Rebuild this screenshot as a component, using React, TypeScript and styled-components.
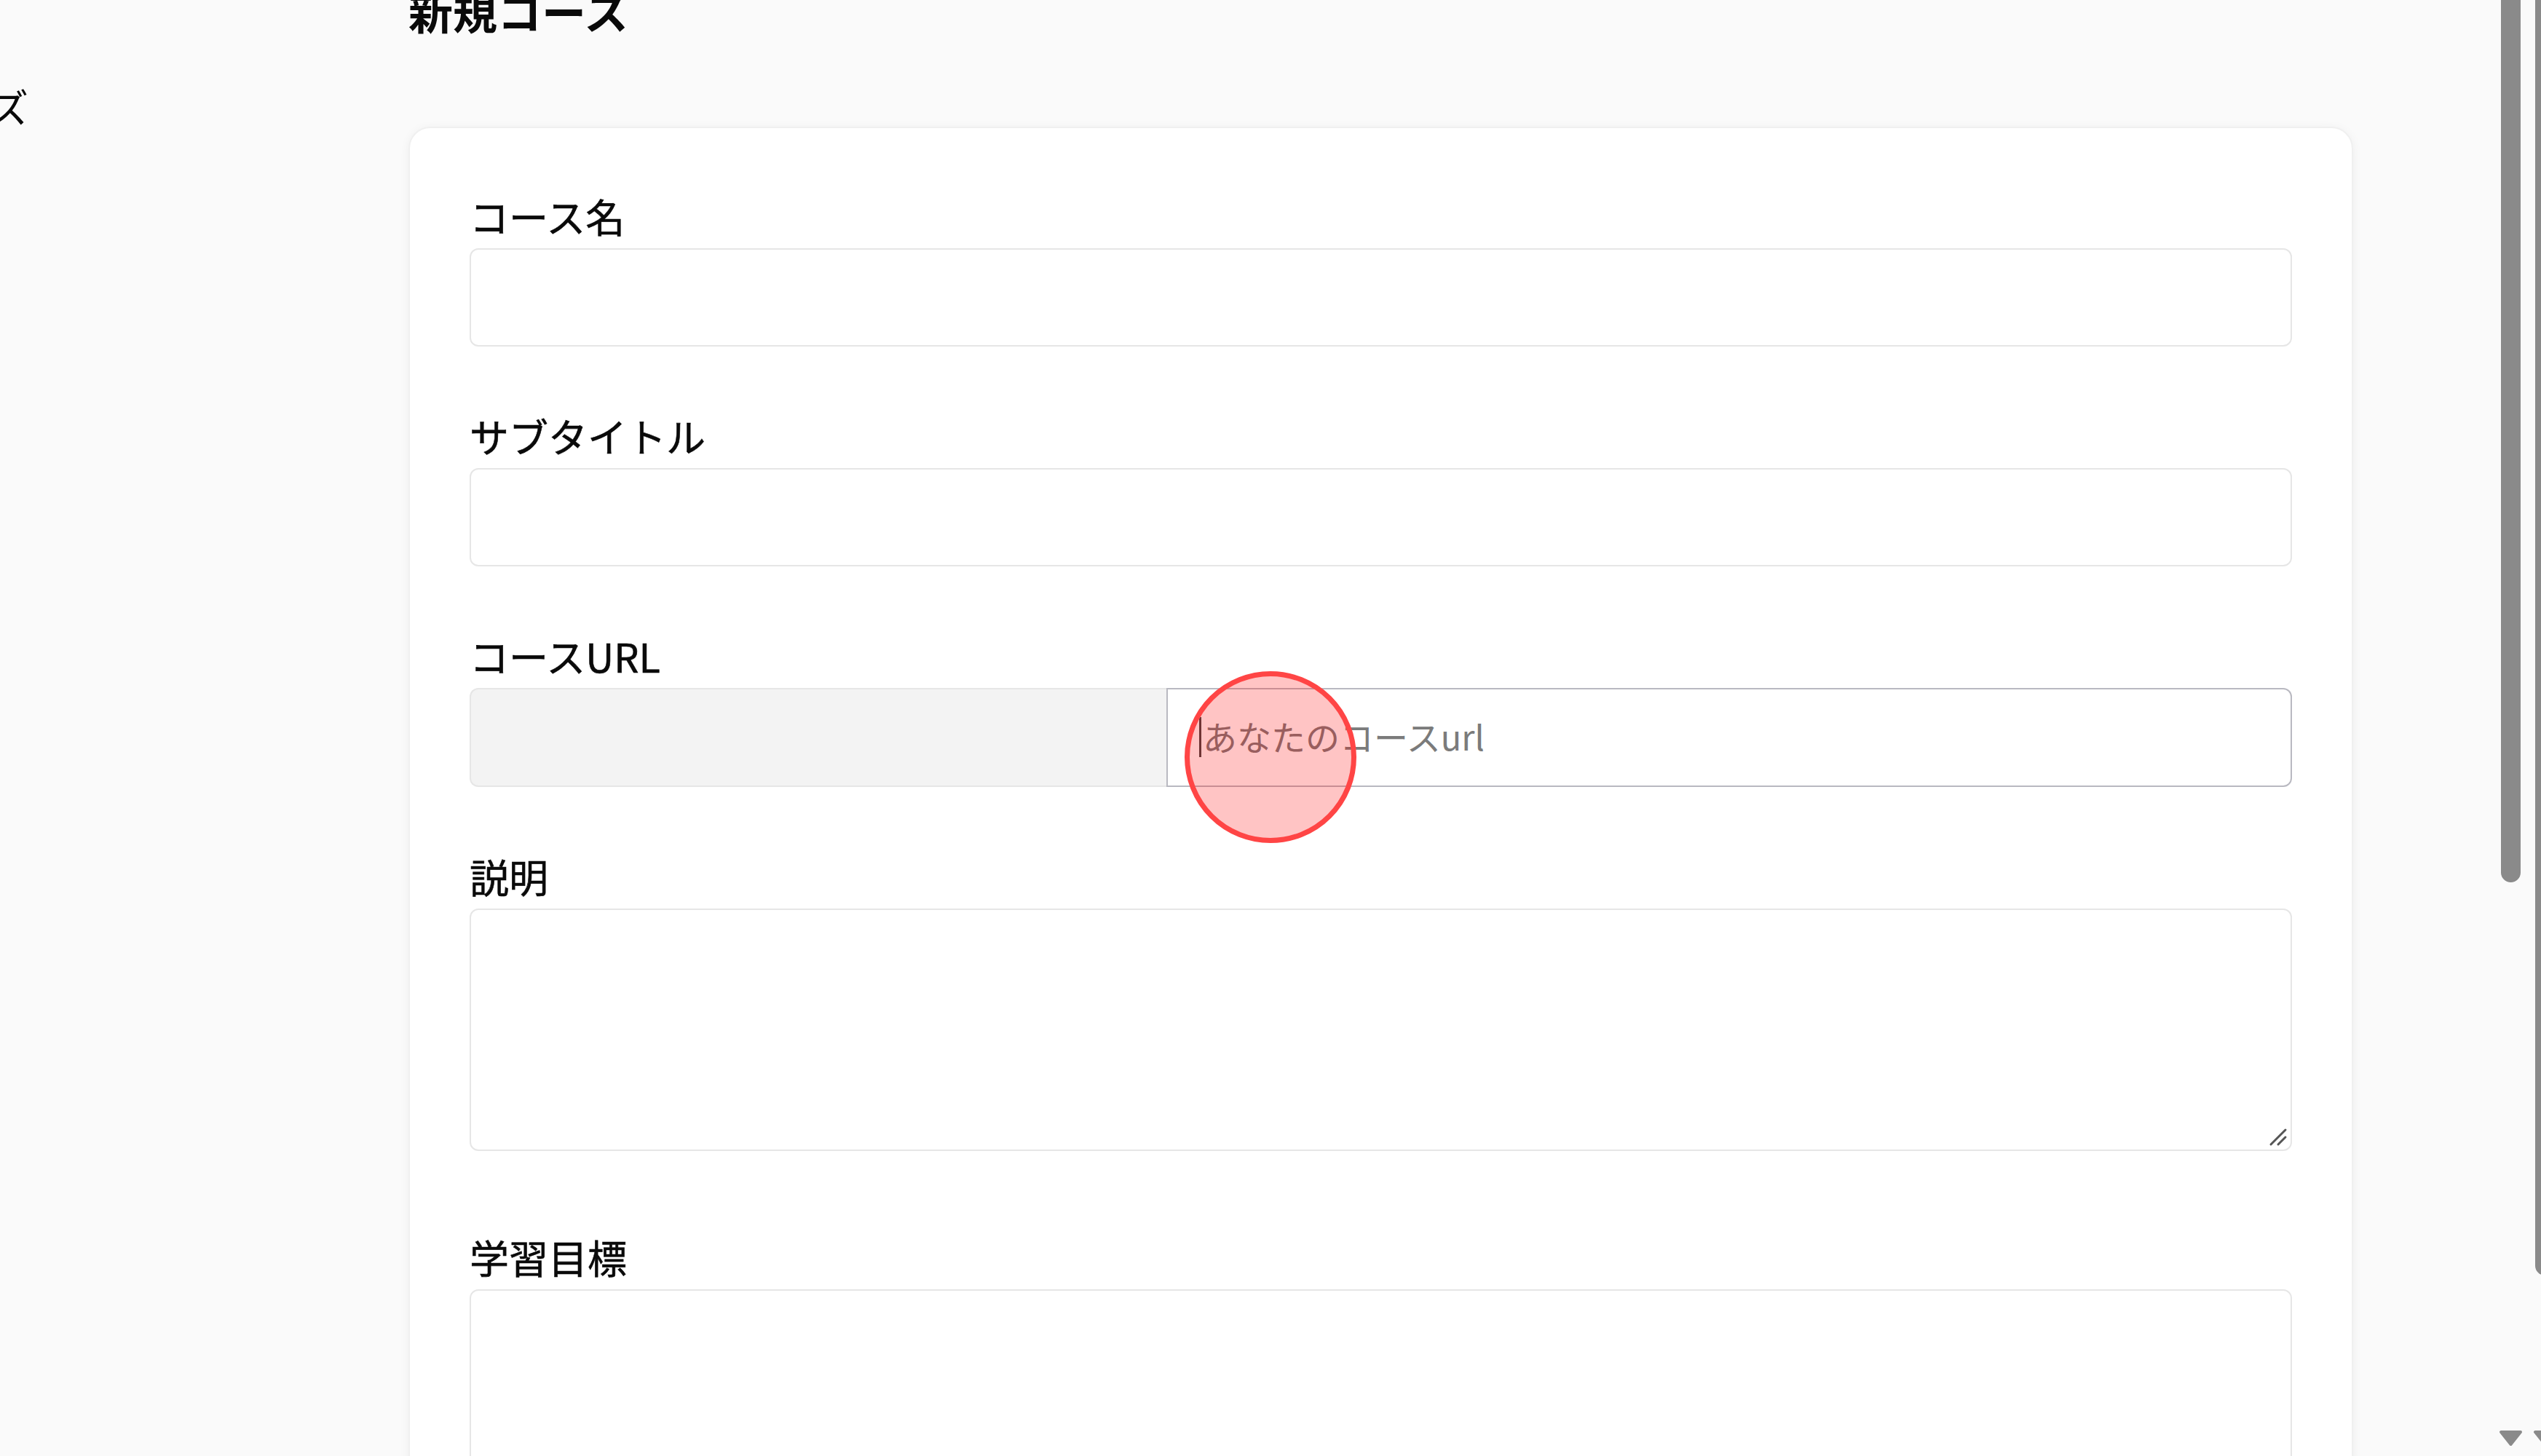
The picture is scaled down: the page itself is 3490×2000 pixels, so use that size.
import React from 'react'
import styled, { createGlobalStyle } from 'styled-components'

const GlobalStyle = createGlobalStyle`
    html, body {
        margin: 0;
        padding: 0;
        height: 100%;
        overflow: hidden;
        background: #fafafa;
    }
    * {
        box-sizing: border-box;
    }
    body {
        font-family: 'Noto Sans CJK JP', 'Noto Sans', sans-serif;
        color: #0a0a0a;
    }
`

const Page = styled.div`
    display: flex;
    height: 100vh;
    overflow: hidden;
    background: #fafafa;
`

const Sidebar = styled.nav`
    width: 39px;
    flex-shrink: 0;
    overflow: hidden;
    padding-top: 104px;
    display: flex;
    flex-direction: column;
`

const SideItem = styled.div`
    display: flex;
    justify-content: flex-end;
    white-space: nowrap;
    font-size: 54px;
    line-height: 83px;
`

const Main = styled.main`
    flex: 1;
    min-width: 0;
    padding: 0 190px 0 522px;
    display: flex;
    flex-direction: column;
`

const Title = styled.h1`
    margin: -28px 0 0;
    font-size: 61px;
    line-height: 85px;
    font-weight: 700;
`

const Card = styled.section`
    margin-top: 117px;
    background: #ffffff;
    border: 2px solid #f0f0f0;
    border-radius: 30px;
    box-shadow: 0 2px 14px rgba(0, 0, 0, 0.05);
    padding: 82px 82px 0;
    display: flex;
    flex-direction: column;
`

const Field = styled.div<{ $after?: number }>`
    display: flex;
    flex-direction: column;
    margin-bottom: ${(p) => p.$after ?? 84}px;
`

const Label = styled.label`
    font-size: 54px;
    line-height: 78px;
    padding-bottom: 5px;
    color: #0a0a0a;
    -webkit-text-stroke: 0.6px #0a0a0a;
`

const TextInput = styled.input`
    display: block;
    width: 100%;
    height: 135px;
    border: 2px solid #e6e6e6;
    border-radius: 12px;
    background: #ffffff;
    padding: 0 45px;
    font-family: inherit;
    font-size: 47px;
    outline: none;
`

const UrlGroup = styled.div`
    display: flex;
    height: 136px;
`

const UrlPrefix = styled.div`
    width: 957px;
    flex-shrink: 0;
    background: #f3f3f3;
    border: 2px solid #e6e6e6;
    border-right: none;
    border-radius: 12px 0 0 12px;
`

const UrlInputWrap = styled.div`
    position: relative;
    flex: 1;
`

const UrlInput = styled.input`
    display: block;
    width: 100%;
    height: 100%;
    border: 2px solid #b9b9c1;
    border-radius: 0 12px 12px 0;
    background: #ffffff;
    padding: 0 45px 6px 48px;
    font-family: 'Noto Sans CJK JP', 'Noto Sans', sans-serif;
    font-size: 47px;
    outline: none;

    &::placeholder {
        color: #7b7b7b;
    }
`

const Caret = styled.span`
    position: absolute;
    left: 45px;
    top: 40px;
    width: 3px;
    height: 55px;
    background: #444444;
`

const ClickMark = styled.span`
    position: absolute;
    left: 25px;
    top: -23px;
    width: 236px;
    height: 236px;
    border-radius: 50%;
    border: 7px solid #ff4545;
    background: rgba(255, 0, 0, 0.23);
    pointer-events: none;
`

const TextArea = styled.textarea`
    display: block;
    width: 100%;
    height: 333px;
    border: 2px solid #e6e6e6;
    border-radius: 12px;
    background: #ffffff;
    padding: 30px 45px;
    font-family: inherit;
    font-size: 47px;
    resize: none;
    outline: none;
`

const AreaWrap = styled.div`
    position: relative;
`

const Grip = styled.svg`
    position: absolute;
    right: 6px;
    bottom: 6px;
    width: 26px;
    height: 26px;
`

const Track = styled.div<{ $width: number }>`
    width: ${(p) => p.$width}px;
    flex-shrink: 0;
    overflow: hidden;
    display: flex;
    flex-direction: column;
    padding-bottom: 13px;
`

const Thumb = styled.div<{ $length: number; $shift: number }>`
    width: 27px;
    flex-shrink: 0;
    margin-left: ${(p) => p.$shift}px;
    height: ${(p) => p.$length}px;
    background: #8a8a8a;
    border-radius: 0 0 14px 14px;
`

const Spacer = styled.div`
    flex: 1;
`

const Arrow = styled.svg<{ $shift: number }>`
    width: 33px;
    height: 23px;
    flex-shrink: 0;
    margin-left: ${(p) => p.$shift}px;
`

function DownArrow({ shift }: { shift: number }) {
    return (
        <Arrow $shift={shift} viewBox="0 0 33 23">
            <path
                d="M3 3 L30 3 L16.5 20 Z"
                fill="#8a8a8a"
                stroke="#8a8a8a"
                strokeWidth="4"
                strokeLinejoin="round"
            />
        </Arrow>
    )
}

function ScrollBar({ width, length, shift }: { width: number; length: number; shift: number }) {
    return (
        <Track $width={width}>
            <Thumb $length={length} $shift={shift} />
            <Spacer />
            <DownArrow shift={shift - 3} />
        </Track>
    )
}

export default function App() {
    return (
        <>
            <GlobalStyle />
            <Page>
                <Sidebar>
                    <SideItem>クイズ</SideItem>
                </Sidebar>
                <Main>
                    <Title>新規コース</Title>
                    <Card>
                        <Field>
                            <Label htmlFor="name">コース名</Label>
                            <TextInput id="name" type="text" />
                        </Field>
                        <Field>
                            <Label htmlFor="subtitle">サブタイトル</Label>
                            <TextInput id="subtitle" type="text" />
                        </Field>
                        <Field>
                            <Label htmlFor="slug">コースURL</Label>
                            <UrlGroup>
                                <UrlPrefix />
                                <UrlInputWrap>
                                    <UrlInput id="slug" type="text" placeholder="あなたのコースurl" />
                                    <Caret />
                                    <ClickMark />
                                </UrlInputWrap>
                            </UrlGroup>
                        </Field>
                        <Field $after={107}>
                            <Label htmlFor="description">説明</Label>
                            <AreaWrap>
                                <TextArea id="description" />
                                <Grip viewBox="0 0 26 26">
                                    <path d="M3 23 L23 3 M13 23 L23 13" stroke="#555555" strokeWidth="3" strokeLinecap="round" />
                                </Grip>
                            </AreaWrap>
                        </Field>
                        <Field>
                            <Label htmlFor="goals">学習目標</Label>
                            <TextArea id="goals" />
                        </Field>
                    </Card>
                </Main>
                <ScrollBar width={48} length={1212} shift={13} />
                <ScrollBar width={20} length={1752} shift={12} />
            </Page>
        </>
    )
}
